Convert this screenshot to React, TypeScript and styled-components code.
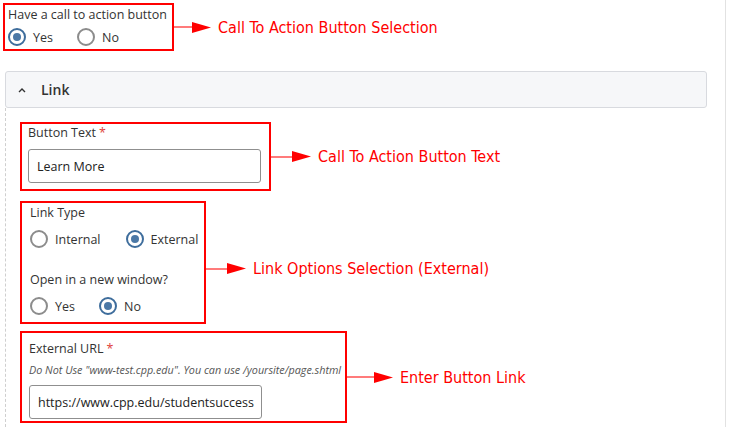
import * as React from "react";
import styled, { createGlobalStyle } from "styled-components";

const GlobalStyle = createGlobalStyle`
  html, body {
    margin: 0;
    padding: 0;
    background: #fff;
  }
  body {
    font-family: "Open Sans", "Liberation Sans", sans-serif;
    color: #333;
  }
`;

const Page = styled.div`
  width: 726px;
  height: 427px;
  overflow: hidden;
  border-right: 1px solid #e2e2e2;
  box-sizing: border-box;
  display: flex;
  flex-direction: column;
`;

const Annotated = styled.div<{ $mt?: number; $ml?: number }>`
  display: flex;
  align-items: center;
  margin-top: ${(p) => p.$mt || 0}px;
  margin-left: ${(p) => p.$ml || 0}px;
`;

const Highlight = styled.div<{ $w: number; $pad: string }>`
  width: ${(p) => p.$w}px;
  box-sizing: border-box;
  border: 2px solid #ff0000;
  padding: ${(p) => p.$pad};
  display: flex;
  flex-direction: column;
`;

const ArrowWrap = styled.div<{ $len: number; $shift?: number }>`
  display: flex;
  align-items: center;
  width: ${(p) => p.$len}px;
  margin-right: 7px;
  transform: translateY(${(p) => p.$shift || 0}px);
`;

const ArrowLine = styled.div`
  flex: 1;
  height: 2px;
  background: #ff7b7b;
`;

const Caption = styled.span<{ $shift?: number }>`
  font-family: "DejaVu Sans Condensed", "Liberation Sans", sans-serif;
  font-size: 16px;
  color: #ff0000;
  white-space: nowrap;
  transform: translateY(${(p) => p.$shift || 0}px);
`;

const Label = styled.div<{ $mt?: number }>`
  font-size: 12.5px;
  line-height: 16px;
  color: #333;
  white-space: nowrap;
  margin-top: ${(p) => p.$mt || 0}px;
`;

const Required = styled.span`
  color: #e0403a;
  margin-left: 3px;
`;

const Hint = styled.div`
  font-size: 10.8px;
  font-style: italic;
  color: #555;
  line-height: 14px;
  white-space: nowrap;
  margin-top: 6px;
`;

const RadioRow = styled.div<{ $mt?: number; $gap: number }>`
  display: flex;
  align-items: center;
  gap: ${(p) => p.$gap}px;
  height: 24px;
  margin-top: ${(p) => p.$mt || 0}px;
`;

const RadioOption = styled.label`
  display: flex;
  align-items: center;
  gap: 7px;
  font-size: 12.5px;
  color: #333;
`;

const RadioCircle = styled.span<{ $on: boolean }>`
  width: 18px;
  height: 18px;
  box-sizing: border-box;
  border-radius: 50%;
  border: 2px solid ${(p) => (p.$on ? "#3e6d9c" : "#8c8c8c")};
  display: flex;
  align-items: center;
  justify-content: center;
  background: #fff;

  &::after {
    content: "";
    width: 8px;
    height: 8px;
    border-radius: 50%;
    background: ${(p) => (p.$on ? "#4b78a6" : "transparent")};
  }
`;

const TextInput = styled.div<{ $mt: number }>`
  width: 233px;
  height: 34px;
  box-sizing: border-box;
  border: 1px solid #8f8f8f;
  border-radius: 3px;
  margin-top: ${(p) => p.$mt}px;
  padding: 0 8px;
  display: flex;
  align-items: center;
  font-size: 12.5px;
  color: #222;
  white-space: nowrap;
  overflow: hidden;
`;

const AccordionHeader = styled.div`
  margin: 20px 0 0 5px;
  width: 702px;
  height: 37px;
  box-sizing: border-box;
  background: #f6f7f9;
  border: 1px solid #d8dadf;
  border-radius: 3px;
  display: flex;
  align-items: center;
  padding-left: 12px;
  gap: 15px;
  font-size: 14px;
  font-weight: 600;
  color: #333;
`;

const AccordionBody = styled.div`
  margin-left: 5px;
  flex: 1;
  border-left: 1px dashed #cfcfcf;
  padding-left: 14px;
  display: flex;
  flex-direction: column;
`;

function Arrow({ len, shift }: { len: number; shift?: number }) {
  return (
    <ArrowWrap $len={len} $shift={shift}>
      <ArrowLine />
      <svg width="19" height="11" viewBox="0 0 19 11">
        <polygon points="0,0 19,5.5 0,11" fill="#ff0000" />
      </svg>
    </ArrowWrap>
  );
}

function Radio({ on, label }: { on: boolean; label: string }) {
  return (
    <RadioOption>
      <RadioCircle $on={on} />
      {label}
    </RadioOption>
  );
}

export default function App() {
  return (
    <Page>
      <GlobalStyle />

      <Annotated $mt={3} $ml={3}>
        <Highlight $w={171} $pad="2px 4px 0 3px">
          <Label>Have a call to action button</Label>
          <RadioRow $mt={2} $gap={24}>
            <Radio on={true} label="Yes" />
            <Radio on={false} label="No" />
          </RadioRow>
        </Highlight>
        <Arrow len={37} />
        <Caption>Call To Action Button Selection</Caption>
      </Annotated>

      <AccordionHeader>
        <svg width="8" height="6" viewBox="0 0 8 6">
          <polyline points="1,5 4,2 7,5" fill="none" stroke="#333" strokeWidth="1.4" />
        </svg>
        Link
      </AccordionHeader>

      <AccordionBody>
        <Annotated $mt={14}>
          <Highlight $w={251} $pad="1px 8px 6px 6px">
            <Label>
              Button Text<Required>*</Required>
            </Label>
            <TextInput $mt={8}>Learn More</TextInput>
          </Highlight>
          <Arrow len={40} />
          <Caption>Call To Action Button Text</Caption>
        </Annotated>

        <Annotated $mt={10}>
          <Highlight $w={186} $pad="2px 4px 4px 8px">
            <Label>Link Type</Label>
            <RadioRow $mt={6} $gap={25}>
              <Radio on={false} label="Internal" />
              <Radio on={true} label="External" />
            </RadioRow>
            <Label $mt={21}>Open in a new window?</Label>
            <RadioRow $mt={6} $gap={24}>
              <Radio on={false} label="Yes" />
              <Radio on={true} label="No" />
            </RadioRow>
          </Highlight>
          <Arrow len={40} shift={6} />
          <Caption $shift={6}>Link Options Selection (External)</Caption>
        </Annotated>

        <Annotated $mt={7}>
          <Highlight $w={327} $pad="8px 6px 2px 7px">
            <Label>
              External URL<Required>*</Required>
            </Label>
            <Hint>Do Not Use "www-test.cpp.edu". You can use /yoursite/page.shtml</Hint>
            <TextInput $mt={8}>https://www.cpp.edu/studentsuccess</TextInput>
          </Highlight>
          <Arrow len={46} />
          <Caption>Enter Button Link</Caption>
        </Annotated>
      </AccordionBody>
    </Page>
  );
}
